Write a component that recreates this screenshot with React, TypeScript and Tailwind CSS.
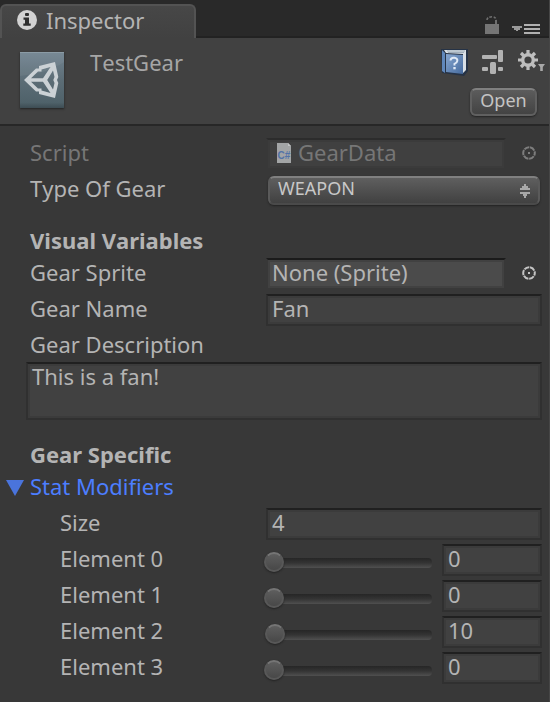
import React from "react";

const fieldClass =
  "h-8 min-w-0 rounded-none border-2 border-[#303030] border-t-[#202020] bg-[#414141] px-1 pb-1 text-[22px] leading-6 text-[#b4b4b4] shadow-[inset_0_0_0_2px_#3b3b3b] outline-none";

function Picker({ label, dim = false }: { label: string; dim?: boolean }) {
  return (
    <button type="button" aria-label={label} disabled={dim} className="mr-[5px] ml-[15px] flex size-4 shrink-0 items-center justify-center">
      <svg viewBox="0 0 16 16" className={dim ? "size-4 text-[#7d7d7d]" : "size-4 text-[#c4c4c4]"} aria-hidden="true">
        <circle cx="8" cy="7" r="5.800" fill="none" stroke="currentColor" strokeWidth="2" strokeDasharray="5.300 0.775" strokeDashoffset="2.650" />
        <rect x="7" y="6" width="2" height="2" fill="currentColor" />
      </svg>
    </button>
  );
}

function InfoIcon() {
  return (
    <svg viewBox="0 0 22 22" className="size-[22px] shrink-0" aria-hidden="true">
      <circle cx="11" cy="11" r="10" fill="#d2d2d2" />
      <rect x="9" y="4" width="4" height="3" rx="1" fill="#2e2e2e" />
      <path d="M7.5 8.5H13v6h1.7v2.2H7.3v-2.2H9v-3.8H7.5z" fill="#2e2e2e" />
    </svg>
  );
}

function AssetIcon() {
  return (
    <svg viewBox="0 0 44 56" className="h-14 w-11 shrink-0 shadow-[0_1px_2px_#222]" aria-hidden="true">
      <defs>
        <linearGradient id="asset" x1="0" y1="0" x2="0" y2="1">
          <stop offset="0" stopColor="#718390" />
          <stop offset="0.5" stopColor="#5c6d76" />
          <stop offset="0.9" stopColor="#4f626a" />
          <stop offset="1" stopColor="#3d4c53" />
        </linearGradient>
      </defs>
      <rect width="44" height="56" fill="url(#asset)" />
      <path d="M0 .5h44" stroke="#8b9ba5" />
      <path d="M44 10C34 17 20 22 0 24V1h44z" fill="#fff" opacity=".05" />
      <path
        fill="#cbd1d5"
        fillRule="evenodd"
        d="M4 28 16 16.500h3V14l16-4 3.300 15-1.300 3 1.300 3L35 46l-16-4v-2.500h-3zM11 26.200h12L30.500 15 21.500 17.500v2h-3.500zM11 29.800l7 6.700h3.500v2l9 2.500-7.500-11.200zM27.200 28l5.800 9.500 1.500-6.500-1.200-3 1.200-3-1.500-6.500z"
      />
    </svg>
  );
}

function LockIcon() {
  return (
    <svg viewBox="0 0 16 20" className="h-5 w-4" aria-hidden="true">
      <rect x="1" y="9" width="14" height="10" fill="#757575" />
      <path d="M12 9V5" stroke="#6f6f6f" strokeWidth="2" />
      <path d="M3 5Q3 2 8 1.800Q12 2 12 5" fill="none" stroke="#6f6f6f" strokeWidth="1.600" strokeDasharray="2.500 1.500" />
    </svg>
  );
}

function PaneMenuIcon() {
  return (
    <svg viewBox="0 0 28 12" className="h-3 w-7" aria-hidden="true">
      <path d="M0 3h10v2H8v2H6v1H4V7H2V5H0z" fill="#9a9a9a" />
      <path d="M12 2h16M12 6h16M12 10h16" stroke="#b0b0b0" strokeWidth="2" />
    </svg>
  );
}

function HelpIcon() {
  return (
    <svg viewBox="0 0 28 28" className="size-7" aria-hidden="true">
      <defs>
        <linearGradient id="cover" x1="0" y1="0" x2="1" y2="1">
          <stop offset="0" stopColor="#87a7d0" />
          <stop offset="1" stopColor="#456a9e" />
        </linearGradient>
      </defs>
      <path d="M1 1h27v22l-4 5-22-3z" fill="#263346" />
      <path d="M4 2h22v20l-3 3V6L6 5z" fill="#d9e0e6" />
      <path d="M7 3h18M8 4.500h16" stroke="#8798a8" strokeWidth=".7" />
      <path d="m2 2 3 3v20l-3-2z" fill="#5f87bb" />
      <path d="m6 6 17 1v19L6 24z" fill="url(#cover)" />
      <path d="M10.500 12.500q.3-3 3.800-2.700 3.300.3 3 3-.2 1.700-2.800 3v1.700" fill="none" stroke="#dfe9f6" strokeWidth="2" />
      <rect x="13.300" y="19" width="2.400" height="2.300" fill="#dfe9f6" />
    </svg>
  );
}

function PresetIcon() {
  return (
    <svg viewBox="0 0 22 26" className="h-[26px] w-[22px]" aria-hidden="true">
      <g fill="#b2b2b2">
        <rect y="6" width="15" height="4" rx="1" />
        <rect x="16" y="1" width="5" height="12" rx="1" />
        <rect y="18" width="6" height="4" rx="1" />
        <rect x="8" y="13" width="6" height="12" rx="1.500" />
        <rect x="16" y="18" width="5" height="4" rx="1" />
      </g>
    </svg>
  );
}

function GearIcon() {
  return (
    <svg viewBox="0 0 27 24" className="h-6 w-[27px]" aria-hidden="true">
      <circle cx="10" cy="10" r="5.300" fill="none" stroke="#bebebe" strokeWidth="3.400" />
      <path
        d="M10 0v4M10 16v4M0 10h4M16 10h4M3 3l2.500 2.500M14.500 14.500 17 17M3 17l2.500-2.500M14.500 5.500 17 3"
        stroke="#bebebe"
        strokeWidth="3.200"
      />
      <path d="M20 14h7l-2.200 3v4h-2.600v-4z" fill="#a8a8a8" />
    </svg>
  );
}

function ScriptIcon() {
  return (
    <svg viewBox="0 0 16 22" className="h-[22px] w-4 shrink-0" aria-hidden="true">
      <path d="M1 1h11l3 3v17H1z" fill="#a3a5a6" />
      <path d="M12 1v3h3z" fill="#c3c5c6" />
      <text x="8" y="17" textAnchor="middle" fontSize="10" fontWeight="700" fontFamily="Liberation Sans, sans-serif" fill="#5273a8">
        C#
      </text>
    </svg>
  );
}

function Row({ label, id, dim, indent, children }: { label: string; id: string; dim?: boolean; indent?: boolean; children: React.ReactNode }) {
  return (
    <div className={indent ? "mb-1 flex h-8 items-center pl-[60px]" : "mb-1 flex h-8 items-center pl-[30px]"}>
      <label
        htmlFor={id}
        className={`${indent ? "w-[206px]" : "w-[236px]"} shrink-0 self-start leading-7 ${dim ? "text-[#767676]" : ""}`}
      >
        {label}
      </label>
      {children}
    </div>
  );
}

const modifiers = [0, 0, 10, 0];

export default function App() {
  return (
    <main className="min-h-screen border-r border-[#464646] bg-[#383838] font-['Noto_Sans','Open_Sans',sans-serif] text-[22px] text-[#b4b4b4] [font-kerning:none]">
      <div className="flex h-[38px] items-end justify-between bg-[#292929] shadow-[inset_0_-2px_0_#222]">
        <div className="flex h-[34px] w-[196px] items-center gap-2 rounded-t-md border-2 border-b-0 border-[#535353] bg-linear-to-b from-[#474747] to-[#414141] pb-1 pl-3.5">
          <InfoIcon />
          <h1 className="leading-7">Inspector</h1>
        </div>
        <div className="flex items-end gap-3 pr-[9px] pb-[3px]">
          <button type="button" aria-label="Lock"><LockIcon /></button>
          <button type="button" aria-label="Pane menu"><PaneMenuIcon /></button>
        </div>
      </div>

      <header className="flex h-[88px] items-start border-b-2 border-[#272727] bg-[#414141] pl-5">
        <div className="pt-3.5"><AssetIcon /></div>
        <h2 className="grow pt-2 pl-[26px] leading-8 text-[#a6a6a6]">TestGear</h2>
        <div className="flex flex-col items-end gap-3 pt-2.5">
          <div className="flex h-7 items-center gap-3.5 pr-1">
            <button type="button" aria-label="Help"><HelpIcon /></button>
            <button type="button" aria-label="Presets"><PresetIcon /></button>
            <button type="button" aria-label="Settings"><GearIcon /></button>
          </div>
          <button
            type="button"
            className="mr-3 h-7 w-[67px] rounded-md border-2 border-[#606060] border-t-[#808080] bg-linear-to-b from-[#5c5c5c] to-[#434343] pb-1 text-lg leading-5 text-[#c4c4c4] shadow-[0_1px_2px_#222]"
          >
            Open
          </button>
        </div>
      </header>

      <form className="pt-3 pr-[7px]">
        <Row label="Script" id="script" dim>
          <div className="flex h-8 min-w-0 grow items-center gap-1.5 border-2 border-[#383838] border-t-[#2c2c2c] bg-[#404040] pb-0.5 pl-2 shadow-[inset_0_0_0_2px_#3b3b3b]">
            <ScriptIcon />
            <input id="script" disabled defaultValue="GearData" className="min-w-0 grow bg-transparent pb-0.5 leading-6 text-[#767676]" />
          </div>
          <Picker label="Select script" dim />
        </Row>
        <Row label="Type Of Gear" id="type">
          <div className="relative mx-0.5 min-w-0 grow">
            <select
              id="type"
              className="block h-[29px] w-full appearance-none rounded-md border-2 border-[#5a5a5a] border-t-[#808080] border-b-[#4a4a4a] bg-linear-to-b from-[#5f5f5f] to-[#414141] pb-1 pl-2 text-lg leading-5 text-[#c8c8c8] shadow-[0_1px_2px_#222]"
            >
              <option>WEAPON</option>
            </select>
            <svg viewBox="0 0 10 16" className="pointer-events-none absolute top-[7px] right-2.5 h-4 w-2.5" aria-hidden="true">
              <path d="M4 1h2v2h2v2h2v2H0V5h2V3h2zM0 9h10v2H7v2H6v2H4v-2H3v-2H0z" fill="#a8a8a8" />
            </svg>
          </div>
        </Row>

        <h3 className="mt-5 h-8 pl-[30px] leading-7 font-bold">Visual Variables</h3>
        <Row label="Gear Sprite" id="sprite">
          <input id="sprite" readOnly defaultValue="None (Sprite)" className="h-8 min-w-0 grow border-2 border-[#383838] border-t-[#1b1b1b] bg-[#4b4b4b] px-1 pb-1 leading-6 shadow-[inset_0_0_0_2px_#414141] outline-none" />
          <Picker label="Select sprite" />
        </Row>
        <Row label="Gear Name" id="name">
          <input id="name" defaultValue="Fan" className={`${fieldClass} grow`} />
        </Row>
        <label htmlFor="description" className="block h-8 pl-[30px] leading-7">Gear Description</label>
        <div className="pl-[26px]">
          <textarea
            id="description"
            defaultValue="This is a fan!"
            className="block h-[58px] w-full resize-none border-2 border-[#303030] border-t-[#202020] bg-[#414141] px-1 leading-6 shadow-[inset_0_0_0_2px_#3b3b3b] outline-none"
          />
        </div>

        <h3 className="mt-5 h-8 pl-[30px] leading-7 font-bold">Gear Specific</h3>
        <button type="button" aria-expanded="true" className="mb-1 flex h-8 items-center gap-1.5 pl-1.5 text-[#4c7eff]">
          <svg viewBox="0 0 18 16" className="h-4 w-[18px]" aria-hidden="true">
            <path d="M0 0h18L9 16z" fill="#4a74dc" />
          </svg>
          <span className="self-start leading-7">Stat Modifiers</span>
        </button>
        <Row label="Size" id="size" indent>
          <input id="size" defaultValue="4" className={`${fieldClass} grow`} />
        </Row>
        {modifiers.map((value, i) => (
          <Row key={i} label={`Element ${i}`} id={`element-${i}`} indent>
            <input
              type="range"
              aria-label={`Element ${i} slider`}
              min={0}
              max={999}
              defaultValue={value}
              className="mt-1.5 mr-2 -ml-0.5 h-5 min-w-0 grow appearance-none bg-transparent [&::-webkit-slider-runnable-track]:mx-0.5 [&::-webkit-slider-runnable-track]:h-2.5 [&::-webkit-slider-runnable-track]:rounded-sm [&::-webkit-slider-runnable-track]:bg-linear-to-b [&::-webkit-slider-runnable-track]:from-[#262626] [&::-webkit-slider-runnable-track]:via-[#343434] [&::-webkit-slider-runnable-track]:to-[#505050] [&::-webkit-slider-thumb]:-mt-1.5 [&::-webkit-slider-thumb]:-ml-0.5 [&::-webkit-slider-thumb]:size-5 [&::-webkit-slider-thumb]:appearance-none [&::-webkit-slider-thumb]:rounded-full [&::-webkit-slider-thumb]:border-2 [&::-webkit-slider-thumb]:border-[#585858] [&::-webkit-slider-thumb]:border-t-[#757575] [&::-webkit-slider-thumb]:bg-linear-to-b [&::-webkit-slider-thumb]:from-[#5e5e5e] [&::-webkit-slider-thumb]:to-[#484848] [&::-webkit-slider-thumb]:shadow-[0_1px_2px_#222]"
            />
            <input id={`element-${i}`} defaultValue={value} className={`${fieldClass} w-[100px] shrink-0`} />
          </Row>
        ))}
      </form>
    </main>
  );
}
